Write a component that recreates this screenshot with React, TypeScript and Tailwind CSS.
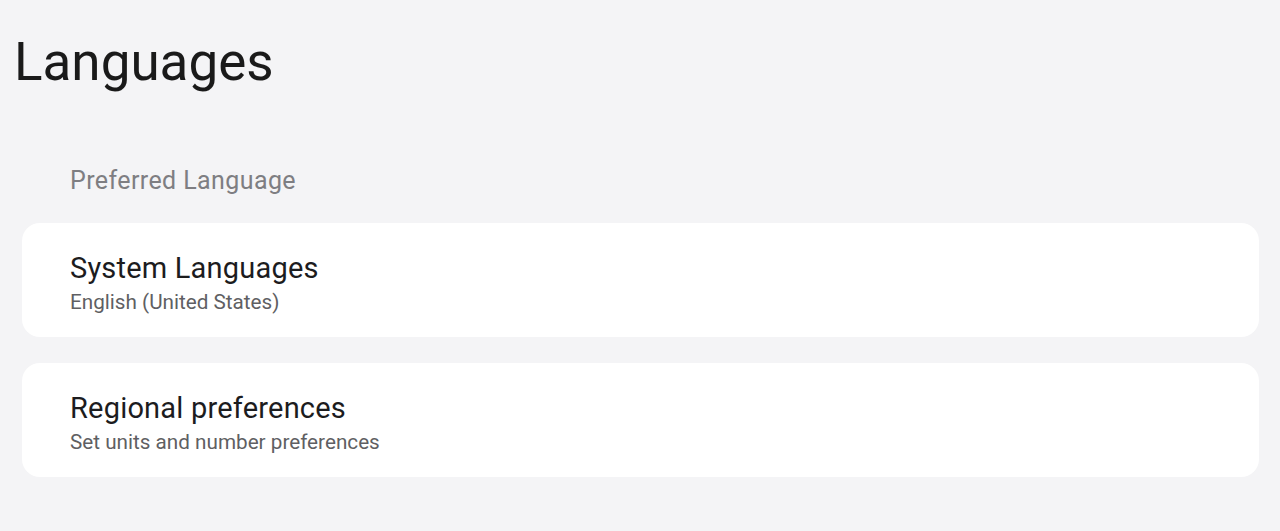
const font = { fontFamily: 'Roboto, "Noto Sans", sans-serif' };

type Item = { title: string; subtitle: string };

const items: Item[] = [
  { title: 'System Languages', subtitle: 'English (United States)' },
  { title: 'Regional preferences', subtitle: 'Set units and number preferences' },
];

export default function App() {
  return (
    <div
      className="h-[531px] w-full overflow-hidden bg-[#f4f4f6] text-[#1a1a1a]"
      style={font}
    >
      <h1 className="pl-[14px] pt-[30px] text-[53px] leading-[64px] font-normal">Languages</h1>

      <div className="mt-[72px] pl-[70px] text-[25px] leading-[30px] tracking-[0.4px] text-[#7e7e82]">
        Preferred Language
      </div>

      <div className="mt-[27px] flex flex-col gap-[26px] pl-[22px] pr-[21px]">
        {items.map((item) => (
          <div
            key={item.title}
            className="flex h-[114px] flex-col rounded-[18px] bg-white pl-[48px] pt-[27px]"
          >
            <div className="text-[29px] leading-[36px] tracking-[0.2px] text-[#1c1c1e]">{item.title}</div>
            <div className="mt-[3px] text-[20.7px] leading-[26px] text-[#5f5f63]">{item.subtitle}</div>
          </div>
        ))}
      </div>
    </div>
  );
}
